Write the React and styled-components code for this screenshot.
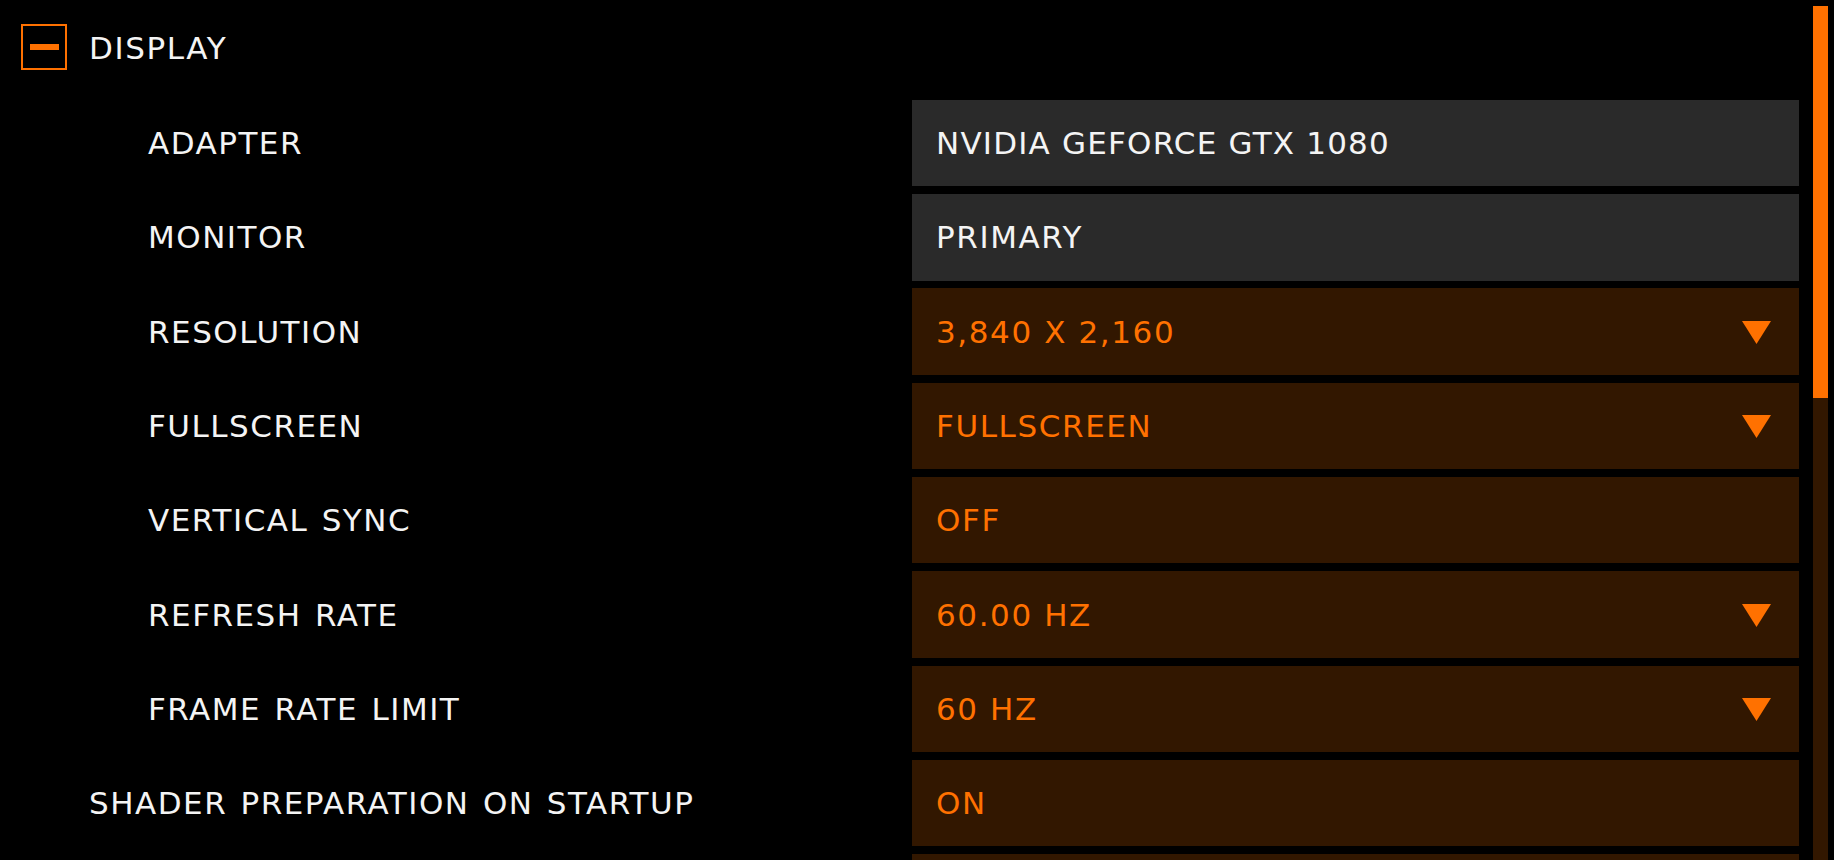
import React from "react";
import styled, { createGlobalStyle } from "styled-components";

const GlobalStyle = createGlobalStyle`
  html, body {
    margin: 0;
    padding: 0;
    height: 860px;
    overflow: hidden;
    background: #000;
  }
  body {
    font-family: "DejaVu Sans", "Liberation Sans", sans-serif;
  }
`;

const ORANGE = "#ff7100";

const settings = [
  { label: "ADAPTER", value: "NVIDIA GEFORCE GTX 1080", locked: true, sub: true, tight: true },
  { label: "MONITOR", value: "PRIMARY", locked: true, sub: true },
  { label: "RESOLUTION", value: "3,840 X 2,160", dropdown: true, sub: true },
  { label: "FULLSCREEN", value: "FULLSCREEN", dropdown: true, sub: true },
  { label: "VERTICAL SYNC", value: "OFF", sub: true },
  { label: "REFRESH RATE", value: "60.00 HZ", dropdown: true, sub: true },
  { label: "FRAME RATE LIMIT", value: "60 HZ", dropdown: true, sub: true },
  { label: "SHADER PREPARATION ON STARTUP", value: "ON" },
  { label: "", value: "" },
];

function App() {
  return (
    <>
      <GlobalStyle />
      <Screen>
        <List>
          <Header>
            <Toggle>
              <Minus />
            </Toggle>
            <HeaderTitle>DISPLAY</HeaderTitle>
          </Header>
          {settings.map((s, i) => (
            <Row key={i}>
              <Label $sub={s.sub}>{s.label}</Label>
              <Value $locked={s.locked} $tight={s.tight}>
                <span>{s.value}</span>
                {s.dropdown && (
                  <svg width="29" height="23" viewBox="0 0 29 23">
                    <polygon points="0,0 29,0 14.5,23" fill={ORANGE} />
                  </svg>
                )}
              </Value>
            </Row>
          ))}
        </List>
        <ScrollTrack>
          <ScrollThumb />
        </ScrollTrack>
      </Screen>
    </>
  );
}

export default App;

const Screen = styled.div`
  display: flex;
  height: 860px;
  overflow: hidden;
  background: #000;
`;

const List = styled.div`
  flex: 1;
  display: flex;
  flex-direction: column;
  gap: 7.8px;
  padding-top: 5.5px;
`;

const Header = styled.div`
  flex: none;
  height: 86.5px;
  display: flex;
  align-items: center;
  gap: 22px;
  padding-left: 21px;
`;

const Toggle = styled.div`
  width: 46px;
  height: 46px;
  box-sizing: border-box;
  border: 2.5px solid ${ORANGE};
  display: flex;
  align-items: center;
  justify-content: center;
  margin-top: -3px;
`;

const Minus = styled.div`
  width: 29px;
  height: 6px;
  background: ${ORANGE};
`;

const HeaderTitle = styled.div`
  color: #f4f4f4;
  font-size: 31px;
  letter-spacing: 1.6px;
  line-height: 1;
`;

const Row = styled.div`
  flex: none;
  height: 86.5px;
  display: grid;
  grid-template-columns: 1fr 887px;
`;

const Label = styled.div`
  display: flex;
  align-items: center;
  padding-left: ${(p) => (p.$sub ? "148px" : "89px")};
  color: #f4f4f4;
  font-size: 31px;
  letter-spacing: 1.5px;
  word-spacing: 2px;
  white-space: nowrap;
`;

const Value = styled.div`
  display: flex;
  align-items: center;
  justify-content: space-between;
  padding: 0 28px 0 24px;
  background: ${(p) => (p.$locked ? "#2a2a2a" : "#321700")};
  color: ${(p) => (p.$locked ? "#f4f4f4" : ORANGE)};
  font-size: 31px;
  letter-spacing: ${(p) => (p.$tight ? "1.2px" : "1.6px")};
  white-space: nowrap;

  svg {
    flex: none;
    margin-top: 2px;
  }
`;

const ScrollTrack = styled.div`
  flex: none;
  width: 15px;
  margin: 6px 6px 0 14px;
  background: #321700;
`;

const ScrollThumb = styled.div`
  height: 392px;
  background: ${ORANGE};
`;
